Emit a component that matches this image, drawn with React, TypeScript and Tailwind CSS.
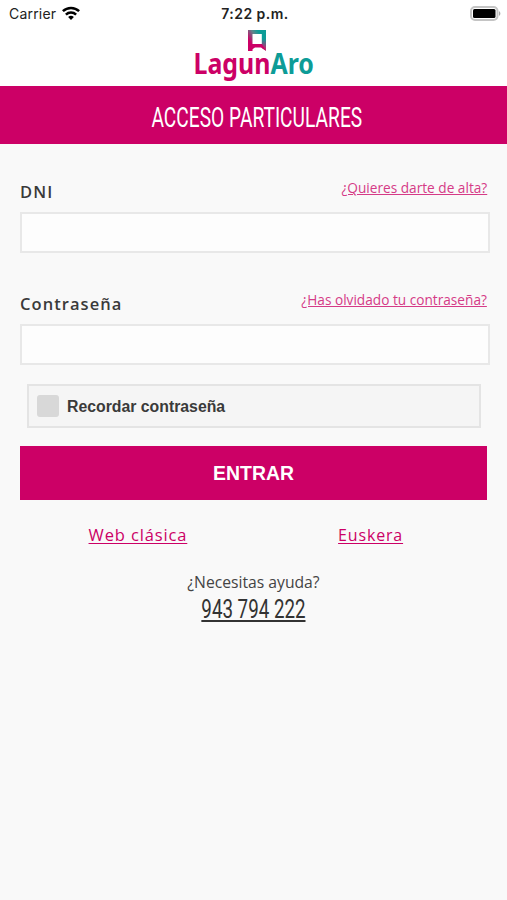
import type { ReactNode } from "react";

const WifiIcon = () => (
  <svg width="18" height="14" viewBox="0 0 18 14" fill="none" stroke="#000" strokeWidth="2.5">
    <path d="M0.9 5.2a11.6 11.6 0 0 1 16.2 0" />
    <path d="M3.9 8.6a7.3 7.3 0 0 1 10.2 0" />
    <path d="M9 14L6.1 11.1a4.2 4.2 0 0 1 5.8 0z" fill="#000" stroke="none" />
  </svg>
);

const BatteryIcon = () => (
  <svg width="31" height="15" viewBox="0 0 31 15" fill="none">
    <rect x="1" y="1" width="26.5" height="13" rx="4" fill="#fff" stroke="#c4c4c4" strokeWidth="2" />
    <rect x="3" y="3" width="22.5" height="9" rx="1.5" fill="#000" />
    <path d="M29 5.2c1.8 0.7 1.8 3.9 0 4.6z" fill="#a8a8a8" />
  </svg>
);

const LogoMark = () => (
  <svg width="18" height="21" viewBox="0 0 18 21" fill="none">
    <defs>
      <linearGradient id="mark" x1="1" y1="13" x2="15" y2="4" gradientUnits="userSpaceOnUse">
        <stop offset="0.1" stopColor="#cc0066" />
        <stop offset="0.55" stopColor="#5f858b" />
        <stop offset="0.85" stopColor="#0d9c97" />
      </linearGradient>
      <linearGradient id="side" x1="0" y1="4" x2="0" y2="20" gradientUnits="userSpaceOnUse">
        <stop offset="0.3" stopColor="#0d9c97" />
        <stop offset="0.85" stopColor="#b03273" />
      </linearGradient>
    </defs>
    <path d="M0 0H18V4H4.5V21H0z" fill="url(#mark)" />
    <path d="M13.8 3.5H18V21L13.8 18z" fill="url(#side)" />
    <path d="M4 14H14L17.8 20.5L13 17.6H7L4 19.5z" fill="#cc0066" />
  </svg>
);

const StatusBar = () => (
  <div className="grid grid-cols-3 items-center h-[26px] pl-[9px] pr-[6px] text-[14px] text-[#222]">
    <div className="flex items-center gap-[6px]">
      <span className="tracking-[0.2px]">Carrier</span>
      <WifiIcon />
    </div>
    <span className="text-center font-semibold tracking-[0.45px]">7:22 p.m.</span>
    <div className="flex justify-end">
      <BatteryIcon />
    </div>
  </div>
);

type FieldProps = {
  id: string;
  label: string;
  type: string;
  link: ReactNode;
};

const Field = ({ id, label, type, link }: FieldProps) => (
  <div className="flex flex-col">
    <div className="flex justify-between h-[36px] pr-[3px]">
      <label
        htmlFor={id}
        className="pt-[4px] origin-left scale-x-[0.97] text-[17px] leading-6 font-semibold tracking-[1.1px] text-[#3a3a3a]">
        {label}
      </label>
      {link}
    </div>
    <input
      id={id}
      type={type}
      className="w-full h-[41px] border-2 border-[#e8e8e8] bg-[#fdfdfd] px-3 outline-none"
    />
  </div>
);

const App = () => {
  return (
    <div className="flex flex-col w-[507px] h-[900px] overflow-hidden bg-[#f9f9f9] font-['Open_Sans',sans-serif]">
      <header className="h-[86px] bg-white font-['Inter',sans-serif]">
        <StatusBar />
        <div className="flex flex-col items-center pt-[4px] pl-[7px]">
          <LogoMark />
        </div>
        <div className="flex justify-center font-['Noto_Sans',sans-serif] text-[28px] leading-[30px] font-bold -mt-[3px]">
          <span className="scale-x-[0.89] text-[#cc0066]">
            Lagun<span className="text-[#0d9c97]">Aro</span>
          </span>
        </div>
      </header>

      <div className="flex items-center justify-center h-[58px] pt-[5px] pl-[6px] bg-[#cc0066]">
        <h1 className="font-['Roboto',sans-serif] text-[28px] leading-none whitespace-nowrap text-white scale-x-[0.685]">
          ACCESO PARTICULARES
        </h1>
      </div>

      <main className="flex flex-col pl-5 pr-[17px] pt-[32px]">
        <div className="flex flex-col gap-[35px]">
          <Field
            id="dni"
            label="DNI"
            type="text"
            link={
              <a className="origin-right -mt-px scale-x-[0.91] text-[15px] leading-6 underline underline-offset-1 text-[#d53b87]">
                ¿Quieres darte de alta?
              </a>
            }
          />
          <Field
            id="password"
            label="Contraseña"
            type="password"
            link={
              <a className="origin-right -mt-px scale-x-[0.91] text-[15px] leading-6 underline underline-offset-1 text-[#d53b87]">
                ¿Has olvidado tu contraseña?
              </a>
            }
          />
        </div>

        <label className="flex items-center h-[44px] mt-[19px] ml-[7px] mr-[9px] pl-2 border-2 border-[#e4e4e4] bg-[#f5f5f5] font-['Liberation_Sans',sans-serif] text-[16px] font-bold text-[#3a3a3a]">
          <span className="size-[22px] mr-2 rounded-[3px] bg-[#d8d8d8]" />
          <span className="pt-[2px] origin-left scale-x-[0.988]">Recordar contraseña</span>
        </label>

        <button className="h-[54px] mt-[18px] mr-[3px] bg-[#cc0066] font-['Liberation_Sans',sans-serif] text-[20px] font-bold text-white">
          <span className="block scale-x-[0.97]">ENTRAR</span>
        </button>

        <div className="grid grid-cols-2 mt-[23px] text-[17px] leading-6 tracking-[0.9px] text-[#cc0066]">
          <a className="justify-self-center scale-x-[0.97] underline underline-offset-2">Web clásica</a>
          <a className="justify-self-center mr-[4px] scale-x-[0.94] underline underline-offset-2">Euskera</a>
        </div>

        <div className="flex flex-col items-center mt-[23px] mr-[3px] text-[#444]">
          <p className="text-[16px] leading-6 scale-x-[0.98]">¿Necesitas ayuda?</p>
          <a className="mt-px font-['Roboto',sans-serif] text-[25px] leading-[30px] underline underline-offset-2 decoration-2 text-[#333] scale-x-[0.75]">
            943 794 222
          </a>
        </div>
      </main>
    </div>
  );
};

export default App;
